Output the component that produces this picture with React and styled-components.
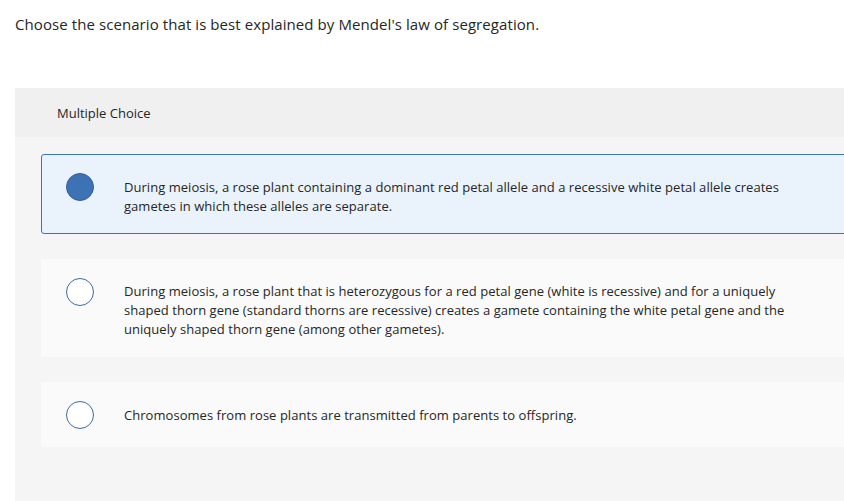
import React from "react";
import styled, { createGlobalStyle } from "styled-components";

const GlobalStyle = createGlobalStyle`
  html, body {
    margin: 0;
    padding: 0;
    background: #ffffff;
    overflow: hidden;
  }
  body {
    font-family: "Open Sans", "Lato", "Liberation Sans", sans-serif;
    color: #2d2d2d;
  }
`;

const Page = styled.div`
  width: 844px;
  height: 501px;
  overflow: hidden;
`;

const Prompt = styled.p`
  margin: 0;
  padding: 15px 15px 0 15px;
  font-size: 15px;
  line-height: 19px;
  letter-spacing: 0.08px;
  color: #262626;
  height: 88px;
  box-sizing: border-box;
`;

const Panel = styled.section`
  margin-left: 15px;
  width: 860px;
  background: #f5f5f5;
  min-height: 440px;
`;

const PanelHeader = styled.div`
  height: 49px;
  display: flex;
  align-items: center;
  padding-left: 42px;
  background: #f0f0f0;
  font-size: 13px;
  color: #262626;
`;

const Options = styled.div`
  display: flex;
  flex-direction: column;
  gap: 25px;
  padding: 17px 0 0 26px;
`;

const Option = styled.label`
  display: flex;
  align-items: flex-start;
  gap: 30px;
  padding: 18px 0 17px 24px;
  border: 1px solid ${(p) => (p.$selected ? "#3b74ba" : "transparent")};
  border-radius: 3px;
  background: ${(p) => (p.$selected ? "#eaf2fc" : "#fafafa")};
  cursor: pointer;
`;

const Radio = styled.span`
  flex: 0 0 auto;
  width: 28px;
  height: 28px;
  box-sizing: border-box;
  border-radius: 50%;
  border: 1.5px solid ${(p) => (p.$selected ? "#30609f" : "#3a6ba7")};
  background: ${(p) => (p.$selected ? "#3d72b5" : "#ffffff")};
`;

const OptionText = styled.span`
  padding-top: 4.5px;
  font-size: 13px;
  line-height: 19px;
  letter-spacing: 0.04px;
  color: #262626;
  white-space: nowrap;
`;

const choices = [
  {
    lines: [
      "During meiosis, a rose plant containing a dominant red petal allele and a recessive white petal allele creates",
      "gametes in which these alleles are separate.",
    ],
    selected: true,
  },
  {
    lines: [
      "During meiosis, a rose plant that is heterozygous for a red petal gene (white is recessive) and for a uniquely",
      "shaped thorn gene (standard thorns are recessive) creates a gamete containing the white petal gene and the",
      "uniquely shaped thorn gene (among other gametes).",
    ],
  },
  {
    lines: ["Chromosomes from rose plants are transmitted from parents to offspring."],
  },
];

export default function App() {
  return (
    <Page>
      <GlobalStyle />
      <Prompt>Choose the scenario that is best explained by Mendel's law of segregation.</Prompt>
      <Panel>
        <PanelHeader>Multiple Choice</PanelHeader>
        <Options>
          {choices.map((c, i) => (
            <Option key={i} $selected={c.selected}>
              <Radio $selected={c.selected} />
              <OptionText>
                {c.lines.map((l, j) => (
                  <React.Fragment key={j}>
                    {j > 0 && <br />}
                    {l}
                  </React.Fragment>
                ))}
              </OptionText>
            </Option>
          ))}
        </Options>
      </Panel>
    </Page>
  );
}
